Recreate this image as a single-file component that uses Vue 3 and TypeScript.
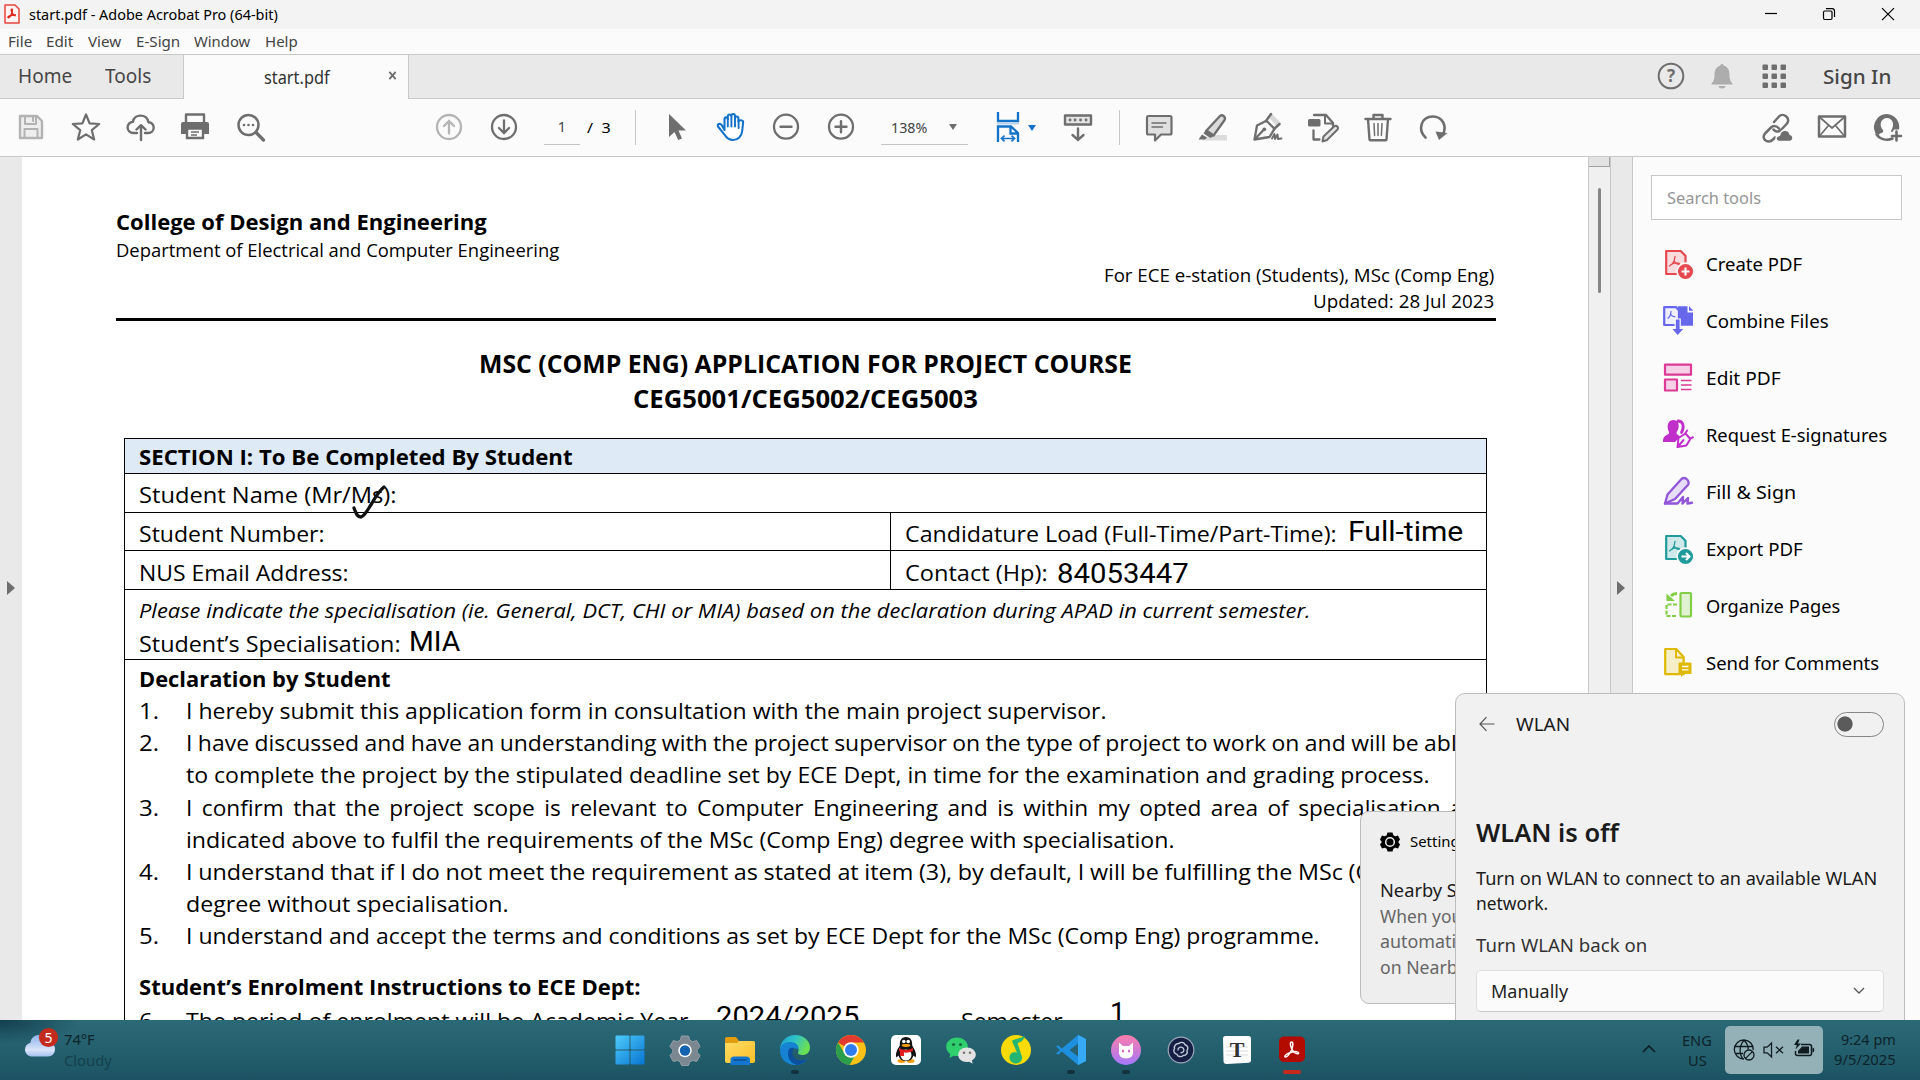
<script setup lang="ts">
import type { Directive } from 'vue'

// Stretches or condenses a run of text so its ink spans the given width.
const vFit: Directive<HTMLElement, number> = {
  mounted(el, binding) {
    const size = parseFloat(getComputedStyle(el).fontSize)
    const natural = el.getBoundingClientRect().width
    const target = binding.value + size * 0.12
    el.style.transform = `scaleX(${(target / natural).toFixed(4)})`
    el.style.marginRight = `${(target - natural).toFixed(2)}px`
  },
}

interface Glyph { id: string; w: number; body: string }

const G = '#6e6e6e'
const s = (w = 2.4, c = G) => `fill="none" stroke="${c}" stroke-width="${w}" stroke-linecap="round" stroke-linejoin="round"`

const fileGlyphs: Glyph[] = [
  { id: 'save', w: 55, body: `<path d="M5 5h17l5 5v17H5z" fill="#eee" stroke="#b3b3b3" stroke-width="2.4" stroke-linejoin="round"/><path d="M10 5v8h11V5M9.500 27v-9h13v9" ${s(2, '#b3b3b3')}/><path d="M18 6v4" ${s(2, '#b3b3b3')}/>` },
  { id: 'star', w: 55, body: `<path d="M16 3.500l3.600 8.900 9.600.6-7.400 6.200 2.400 9.300-8.200-5.100-8.200 5.100 2.400-9.300-7.400-6.200 9.600-.6z" ${s(2.2)}/>` },
  { id: 'upload', w: 54.500, body: `<path d="M12 22H8.500a5.600 5.600 0 0 1-.6-11.200C8.500 7 11.700 4.600 15.500 4.600c4.500 0 7.400 2.900 7.900 6.600 3.200.2 5.300 2.500 5.300 5.300 0 3.100-2.400 5.500-5.500 5.500H20" ${s()}/><path d="M16 29V14.500M11.500 18.500l4.500-4.300 4.500 4.300" ${s()}/>` },
  { id: 'print', w: 54, body: `<path d="M7 11V3.500h18V11" ${s(2.4)}/><path d="M4 11h24q2 0 2 2v10h-5v-4H7v4H2V13q0-2 2-2z" fill="${G}"/><path d="M8 17.500h16V27H8z" fill="#fbfbfb" stroke="${G}" stroke-width="2.400"/><path d="M12 21h8M12 24h6" stroke="${G}" stroke-width="1.300"/>` },
  { id: 'find', w: 57, body: `<circle cx="13.500" cy="14" r="10" ${s(2.5)}/><path d="M21 21.500l7.500 7.500" ${s(3.2)}/><g fill="${G}"><circle cx="9" cy="14" r="1.300"/><circle cx="13.500" cy="14" r="1.300"/><circle cx="18" cy="14" r="1.300"/></g>` },
]

const viewGlyphs: Glyph[] = [
  { id: 'arrow', w: 54, body: `<path d="M8 3v23l5.500-5 3.700 8 3.800-1.600-3.500-8H25z" fill="${G}"/>` },
  { id: 'hand', w: 54, body: `<path d="M9.500 19V8.200c0-2.500 3.300-2.500 3.300 0V5.500c0-2.600 3.600-2.600 3.600 0V5c0-2.600 3.600-2.600 3.600 0v2.500c0-2.600 3.400-2.600 3.400 0v3c.4-2 5-1.700 4.700 1l-.9 8.500c-.5 5.400-4.300 9-9.200 9-4 0-6.500-2-8.300-5.200L3 15.500c-.9-2.600 2-3.700 3.700-1.400z" fill="#fff" stroke="#1473c8" stroke-width="2.100" stroke-linejoin="round"/><path d="M12.800 8v7.500M16.400 6v9.500M20 7v8.500M23.600 10v7" ${s(1.9, '#1473c8')}/>` },
  { id: 'minus', w: 55, body: `<circle cx="16" cy="15.700" r="12" ${s(2.3)}/><path d="M10.500 15.700h11" ${s(2.4)}/>` },
  { id: 'plus', w: 55, body: `<circle cx="16" cy="15.700" r="12" ${s(2.3)}/><path d="M10.500 15.700h11M16 10.200v11" ${s(2.4)}/>` },
]

const editGlyphs: Glyph[] = [
  { id: 'comment', w: 54.500, body: `<path d="M5 5h22q1.500 0 1.500 1.500V22Q28.500 23.500 27 23.500H18l-6 6v-6H5.500Q4 23.500 4 22V6.500Q4 5 5 5z" fill="#e0e0e0" stroke="${G}" stroke-width="2.200" stroke-linejoin="round"/><path d="M9 12h14M9 16h10.500" ${s(1.4)}/>` },
  { id: 'highlight', w: 54.500, body: `<path d="M12 24h18v5.500H5z" fill="#dcdcdc"/><path d="M9.500 19.500L23 5c2-2 6.200.6 4.600 4L16.500 24.500z" fill="#dcdcdc" stroke="${G}" stroke-width="2.300" stroke-linejoin="round"/><path d="M8.500 19l8 6-3 2-7-4.500z" fill="${G}"/><path d="M5 23.500L1.500 28.500H8l2-2z" fill="${G}"/>` },
  { id: 'pen', w: 55, body: `<path d="M16 6l8.500 8.500 4-3L20 3z" fill="#d8d8d8"/><path d="M2.500 28.500L5 14.500 14.500 9.800l8 8L17.500 26z M2.500 28.500l8.500-9" ${s(2.3)}/><circle cx="12.300" cy="18.300" r="1.900" fill="${G}"/><path d="M14 10L19 3M22 18l5.500-5" ${s(2.5)}/><path d="M20 27.500l2.500-4.500 .5 5 2.500-4.500 .5 4.500 3.500-.6" ${s(2)}/>` },
  { id: 'pdfedit', w: 55.500, body: `<path d="M7 4h12l7 8v3M6.500 19.500v9h6" ${s(2.3)}/><path d="M18 4v8.500h8" ${s(2)}/><rect x="1" y="8" width="12.500" height="7.500" rx="1.500" fill="${G}"/><path d="M15.500 30.500l1-5L27 15.500q2-1.500 3.300 0t0 3.300L20 29z" fill="#e6e6e6" stroke="${G}" stroke-width="2" stroke-linejoin="round"/>` },
  { id: 'trash', w: 54.500, body: `<path d="M3.500 8h25M11.500 8V4h9v4M6 8l1.500 20.500q0 .8 1 .8h15q1 0 1-.8L26 8" ${s(2.4)}/><path d="M12 12.500l.6 12M16 12.500v12M20 12.500l-.6 12" ${s(1.5)}/>` },
  { id: 'rotate', w: 54.500, body: `<path d="M8.500 26.500C.5 19 4 5.500 15.800 5.500c10 0 14.200 10 10.200 17.500" ${s(2.6)}/><path d="M18.500 20.500l12 1.500-8.500 7z" fill="${G}"/>` },
]

const shareGlyphs: Glyph[] = [
  { id: 'link', w: 55, body: `<path d="M13 12l5-5.500c4-4.500 12 1.500 8 7l-6 6.500c-2.800 2.600-6 1.500-7.500-.5M18 18.500c-2.500-3-6-3-8-1l-6 6c-4.500 6 3.500 10.500 8 6l2-2" ${s(2.500)} transform="translate(0 -1)"/><path d="M18 30.500q-3-.4-3-3t3.600-3.300q1-5 5.400-5 4.200 0 5 4 3 .8 3 3.700 0 2.800-2.800 3.600z" fill="${G}" stroke="#fbfbfb" stroke-width="1.400"/>` },
  { id: 'mail', w: 55.500, body: `<path d="M3 5.500h26v20H3z" ${s(2.500)}/><path d="M4 6.500l12 10.500L28 6.500M4 24.500l8.500-10M28 24.500l-8.500-10" ${s(1.700)}/>` },
  { id: 'user', w: 54.500, body: `<path d="M16 3a13 13 0 0 0-9.500 21.800c2-2.600 4.600-2.800 5.500-3.800.8-1-.1-2-1.300-3.700C8.200 13 10.500 7 16 7s7.400 6 5.200 10.500c-.9 1.800-1.500 2.600-.7 3.500h1l1.500-2.500h5A13 13 0 0 0 16 3z" fill="${G}"/><path d="M5.600 23.500A12.800 12.800 0 0 0 21.500 27.500" ${s(2.500)}/><path d="M25.500 20.500v9M21 25h9" ${s(2.600)}/>` },
]

const sheet = (c: string, f: string) => `<path d="M3.200 3h14.500l4.800 4.800V26H3.200z" fill="${f}" stroke="${c}" stroke-width="2.200" stroke-linejoin="round"/><path d="M12 8.500c-.6 5.500-1.800 7-5.500 9.500M11.500 13.500c1.500 2.800 3.500 3.200 6.500 3.200M7.500 17c2.500-1.800 6.500-2.400 9-1.500" fill="none" stroke="${c}" stroke-width="1.300" stroke-linecap="round"/>`

interface Tool { label: string; w: number; icon: string }
const tools: Tool[] = [
  { label: 'Create PDF', w: 94, icon: sheet('#e5484f', '#f9dcde') + `<circle cx="22.500" cy="23.500" r="8.400" fill="#e5484f" stroke="#fbfbfb" stroke-width="1.600"/><path d="M22.500 19.500v8M18.500 23.500h8" stroke="#fff" stroke-width="2.200"/>` },
  { label: 'Combine Files', w: 120.5, icon: `<path d="M1.200 2.200h12L16 5.500V20H1.200z" fill="#f0f0ff" stroke="#6767ec" stroke-width="2.200" stroke-linejoin="round"/><path d="M8 6c0 4-1 6-3.500 7.500M7.800 9.500c1 1.800 2.700 2.300 4.500 2.300" fill="none" stroke="#6767ec" stroke-width="1.200"/><path d="M15 1.200h9.500v6.300H30v13.300H15z" fill="#6767ec"/><path d="M26 1l4.300 4.800H26z" fill="#6767ec"/><path d="M12.200 14h5v9.500h4.300L14.700 31 8 23.500h4.200z" fill="#6767ec" stroke="#fbfbfb" stroke-width="1.200"/>` },
  { label: 'Edit PDF', w: 72.5, icon: `<g fill="#f6d0e6" stroke="#dc3a96" stroke-width="2.200" stroke-linejoin="round"><rect x="2" y="2.700" width="26" height="10"/><rect x="2" y="17.500" width="12" height="11"/></g><path d="M18 18.500h10.500M18 23h10.500M18 27.500h10.500" stroke="#dc3a96" stroke-width="1.600"/>` },
  { label: 'Request E-signatures', w: 179, icon: `<path d="M10.500 1c4 0 6 3.600 5 8-.6 2.700-2 3.700-2 5.200 0 1.600 3.500 2 3.500 3.800L12 23H0c0-6 2.500-6.200 5.500-8 1-.7.600-2-.200-3.500C3.500 6 5.500 1 10.500 1z" fill="#c02fc9"/><path d="M15 2c5.500.2 6.500 6 3.500 11.500" ${s(2.8, '#c02fc9')}/><path d="M14.500 28l1-9 7-4.500 4.800 5.500-4 6.500z M14.500 28l6-7M22 14.500l2.200-3M27 20l3-1.800" fill="#fbfbfb" stroke="#c02fc9" stroke-width="2" stroke-linejoin="round" stroke-linecap="round"/>` },
  { label: 'Fill & Sign', w: 88, icon: `<path d="M2 27.500l2.500-9L18.500 3q2.500-2 5.200.2t1.600 5.200L12 23z" fill="#e8ddf8" stroke="#9256d9" stroke-width="2.300" stroke-linejoin="round"/><path d="M2 27.500h12.500L20 21l-.5 6.500L25 22l-.5 5.500 4.500-.8" ${s(2.400, '#9256d9')}/>` },
  { label: 'Export PDF', w: 94.5, icon: sheet('#219a9c', '#cfe8e9') + `<circle cx="22.500" cy="23.500" r="8.400" fill="#219a9c" stroke="#fbfbfb" stroke-width="1.600"/><path d="M18.500 23.500h7M23 20l3.500 3.500L23 27" fill="none" stroke="#fff" stroke-width="2"/>` },
  { label: 'Organize Pages', w: 132, icon: `<rect x="17.500" y="3" width="10.500" height="23.500" rx="1" fill="#e0f2d2" stroke="#82ce46" stroke-width="2.200"/><path d="M14 14.500H3.500V26H14" fill="none" stroke="#82ce46" stroke-width="2.200" stroke-dasharray="4 1.500"/><path d="M14 3.500c-3 .1-4.500.8-6 2.500" fill="none" stroke="#82ce46" stroke-width="2.800"/><path d="M3.500 3.500V11H12z" fill="#82ce46"/>` },
  { label: 'Send for Comments', w: 171, icon: `<path d="M2.200 2h11l7.500 8v17.200H2.200z" fill="#f6eec8" stroke="#dfb900" stroke-width="2.200" stroke-linejoin="round"/><path d="M13 2v8.500h7.500" ${s(2, '#dfb900')}/><path d="M16.500 15.500h11q1 0 1 1v9.500q0 1-1 1H21L18 30v-3h-1.500q-1 0-1-1v-9.500q0-1 1-1z" fill="#dfb900"/><path d="M19 19.500h6.500M19 22.800h6.500" stroke="#fff" stroke-width="1.300"/>` },
]

interface Clause { n: string; top?: number; rows: { t: string; w: number; ws?: number }[] }
const clauses: Clause[] = [
  { n: '1.', rows: [{ t: 'I hereby submit this application form in consultation with the main project supervisor.', w: 918 }] },
  { n: '2.', rows: [
    { t: 'I have discussed and have an understanding with the project supervisor on the type of project to work on and will be able', w: 1281, ws: -0.5 },
    { t: 'to complete the project by the stipulated deadline set by ECE Dept, in time for the examination and grading process.', w: 1241 },
  ] },
  { n: '3.', top: 1, rows: [
    { t: 'I confirm that the project scope is relevant to Computer Engineering and is within my opted area of specialisation as', w: 1285, ws: 3.4 },
    { t: 'indicated above to fulfil the requirements of the MSc (Comp Eng) degree with specialisation.', w: 986 },
  ] },
  { n: '4.', rows: [
    { t: 'I understand that if I do not meet the requirement as stated at item (3), by default, I will be fulfilling the MSc (Comp Eng)', w: 1284, ws: -0.4 },
    { t: 'degree without specialisation.', w: 320 },
  ] },
  { n: '5.', rows: [{ t: 'I understand and accept the terms and conditions as set by ECE Dept for the MSc (Comp Eng) programme.', w: 1131 }] },
]

interface App { id: string; mark?: string; body: string }
const apps: App[] = [
  { id: 'start', body: `<g fill="url(#win)"><rect x="1.500" y="1.500" width="14" height="14" rx="1"/><rect x="16.500" y="1.500" width="14" height="14" rx="1"/><rect x="1.500" y="16.500" width="14" height="14" rx="1"/><rect x="16.500" y="16.500" width="14" height="14" rx="1"/></g>` },
  { id: 'settings', body: `<path d="M12.500 2h7l1.200 4 3 1.700 4-1.200 3.400 6-2.800 3v3l2.800 3-3.400 6-4-1-3 1.500-1.200 3.500h-7L11.300 28l-3-1.500-4 1-3.400-6 2.800-3v-3l-2.800-3 3.400-6 4 1.200L11.300 6z" fill="#7b8791" stroke="#929ca5"/><circle cx="16" cy="16.500" r="6.700" fill="#fff"/><circle cx="16" cy="16.500" r="5.200" fill="#1463b0"/>` },
  { id: 'folder', body: `<path d="M1 5q0-2 2-2h9l3 4h14q2 0 2 2v6H1z" fill="#e29c10"/><path d="M1 9h12l2-2h14q2 0 2 2v18q0 2-2 2H3q-2 0-2-2z" fill="url(#fold)"/><path d="M6.500 31v-5q0-3.500 3.500-3.500h12.500q3.500 0 3.500 3.500v5z" fill="#1576d0"/><path d="M9.500 26h13" stroke="#0a4f94" stroke-width="1.600"/>` },
  { id: 'edge', mark: 'dot', body: `<path d="M1 16C1 7 8 1 16 1c9 0 15 6 15 12.500 0 5-3.500 7.500-7.500 7.500-3 0-5-1-4.500-2.500 1-2 .8-3.500-.5-5C15 9 5 9 1 16z" fill="url(#edgeTop)"/><path d="M1 16c0-5 5-8 10-8 6 0 9 3.500 8.500 7C14 13 11 17 13 22c2 4.500 8 6.500 15 3-3 4.500-7 6-12 6C7 31 1 24.500 1 16z" fill="#1583d2"/><path d="M10 15c-3 7 1 14 8 16 4-.6 8-2.500 10-6-7 3-12 1-14-3-1.500-3.500-.5-6 1.500-8-2-.6-4-.3-5.500 1z" fill="#0c4f9c"/>` },
  { id: 'chrome', body: `<circle cx="16" cy="16" r="15" fill="#fbc116"/><path d="M16 16L3 8.500A15 15 0 0 1 29 8.500H16z" fill="#e23a2e"/><path d="M3 8.500A15 15 0 0 0 14.500 31l7-12L16 16 9.500 19.500z" fill="#2a9e4b"/><circle cx="16" cy="16" r="7.700" fill="#fff"/><circle cx="16" cy="16" r="6" fill="#2f7cee"/>` },
  { id: 'qq', body: `<rect x="1" y="1" width="30" height="30" rx="5" fill="#fff"/><ellipse cx="11.500" cy="27" rx="4" ry="1.900" fill="#f59f0b"/><ellipse cx="20.500" cy="27" rx="4" ry="1.900" fill="#f59f0b"/><path d="M16 3c-4.500 0-6.500 3.500-6.200 8.500C7 16 5 20 6.500 23.500l2-2C10 26 12.500 27 16 27s6-1 7.500-5.500l2 2C27 20 25 16 22.200 11.500 22.500 6.500 20.500 3 16 3z" fill="#111"/><ellipse cx="16" cy="21" rx="5.500" ry="5.500" fill="#fff"/><path d="M9 14q7 4 14 0v3q-7 3.500-14 0z" fill="#e02020"/><path d="M10 16h4v6h-4z" fill="#e02020"/><circle cx="13.800" cy="7.500" r="1.800" fill="#fff"/><circle cx="18.200" cy="7.500" r="1.800" fill="#fff"/><ellipse cx="16" cy="11.500" rx="4.300" ry="1.400" fill="#f59f0b"/>` },
  { id: 'wechat', body: `<path d="M12 3.500C6 3.500 1.200 7.500 1.200 12.800c0 3 1.600 5.500 4 7.200L4.500 24l4-2.300c7 1.800 14.300-2.400 14.300-9C22.800 7.500 18 3.500 12 3.500z" fill="#2fcf6e"/><circle cx="8.500" cy="10.500" r="1.600" fill="#176b3a"/><circle cx="15.500" cy="10.500" r="1.600" fill="#176b3a"/><path d="M22 13.500c-5 0-8.800 3.200-8.800 7.300 0 5 5.300 8.300 11 6.900l3.500 2-.8-3.300c2.300-1.400 3.900-3.300 3.900-5.700 0-4-4-7.200-8.800-7.200z" fill="#e3e3e3"/><circle cx="19" cy="18.800" r="1.300" fill="#777"/><circle cx="25" cy="18.800" r="1.300" fill="#777"/>` },
  { id: 'music', body: `<circle cx="16" cy="16" r="15" fill="#fada07"/><path d="M24.500 1.500c-3 3.500-9 2.500-12.500 5.500l5 11.500c-4-1.200-7.500 1-7.500 5 0 3.700 3 6 6.500 6s6.500-2.500 6-6.500L17.500 9c3-.5 6.500-2.500 7-7.500z" fill="#22b573"/>` },
  { id: 'code', mark: 'dot', body: `<path d="M23 1l8 4v22l-8 4L7 17.500l-4 3.200L1 19.500l4-3.500-4-3.500 2-1.200 4 3.200z" fill="#1f8fe0"/><path d="M23 1l8 4v22l-8 4z" fill="#36aaf5"/><path d="M23 9.500v13L14.500 16z" fill="#276272"/>` },
  { id: 'cat', mark: 'dot', body: `<circle cx="16" cy="16" r="15" fill="url(#cat)"/><path d="M9 8.500l4 3.500h6l4-3.500v10.500q0 5-7 5.500-7-.5-7-5.500z" fill="#fff"/><ellipse cx="13" cy="17" rx="1.100" ry="1.500" fill="#d964c8"/><ellipse cx="19" cy="17" rx="1.100" ry="1.500" fill="#d964c8"/>` },
  { id: 'swirl', body: `<circle cx="16" cy="16" r="12.800" fill="#151f43" stroke="#9aa6b8" stroke-width="1.200"/><path d="M14 9.500c2-2 5.500-1 6 1.200 3 .7 3.600 4 2 5.700 1 3-1 5.200-3.700 5-2 2-5.400 1.400-6.300-1-3-.6-4-3.800-2.500-5.800-.7-2.600 1.500-5.400 4.500-5.100z" fill="none" stroke="#c3cad8" stroke-width="1.400"/><path d="M13 16.500c-.5-3 3-4.500 5-2.500s.5 5-2.500 4.700" fill="none" stroke="#c3cad8" stroke-width="1.300"/>` },
  { id: 'typora', body: `<path d="M4.500 2h23q2.500 0 2.500 2.500v22q0 2-2 2.300L6 30q-3.500.2-3.500-3L2 4.500Q2 2 4.500 2z" fill="#fcfcfc"/><path d="M5 13h22M5 17h22M5 21h22" stroke="#ddd"/><text x="16" y="23" text-anchor="middle" font-family="Liberation Serif, serif" font-weight="700" font-size="22" fill="#333">T</text>` },
  { id: 'acrobat', mark: 'wide', body: `<rect x="3" y="2.500" width="26" height="25.500" rx="5" fill="#b30b00"/><path d="M15.500 8c2.300 0 1.500 5-.5 9-1.500 3-4 6-5.500 6-2-.2.500-3.500 6-4.800 4-1 7-.7 7.200.8 0 1.600-3.600.8-5.700-2-2.200-3-3.700-9-1.500-9z" fill="none" stroke="#fff" stroke-width="1.500"/>` },
]
</script>

<template>
  <div class="desktop">
    <header class="titlebar">
      <svg class="pdf-mark" viewBox="0 0 16 20"><path d="M1 1h10l4 4v14H1z" fill="#fff4f3" stroke="#e8453c" stroke-width="1.500" stroke-linejoin="round" /><path d="M7.500 5c1.500 0 .8 3.500-.5 6-1 2-2.500 3-3 2.500S6 10.800 12 11M7.500 5c-1 1.500 1 5.500 4 7" fill="none" stroke="#e0261c" stroke-width="1.500" /></svg>
      <span v-fit="247" class="title">start.pdf - Adobe Acrobat Pro (64-bit)</span>
      <svg class="winctl" viewBox="0 0 150 30" fill="none" stroke="#000" stroke-width="1.200"><path d="M15 13.500h12" /><rect x="73.500" y="11" width="8.500" height="8.500" rx="1.200" /><path d="M76 8.600h6q2.500 0 2.500 2.500v6" /><path d="M132 8.200l12 12M144 8.200l-12 12" /></svg>
    </header>

    <nav class="menubar">
      <span v-fit="22.500">File</span><span v-fit="25.500">Edit</span><span v-fit="31.500">View</span>
      <span v-fit="42.500">E-Sign</span><span v-fit="54.500">Window</span><span v-fit="31">Help</span>
    </nav>

    <div class="tabbar">
      <div class="hometabs"><span v-fit="52">Home</span><span v-fit="44">Tools</span></div>
      <div class="filetab">
        <span v-fit="63.500" class="tabname">start.pdf</span>
        <svg viewBox="0 0 10 10"><path d="M1.500 1l7 8M8.500 1l-7 8" stroke="#6b6b6b" stroke-width="2" /></svg>
      </div>
      <div class="account">
        <svg class="help" viewBox="0 0 28 28"><circle cx="14" cy="14" r="12.300" fill="none" stroke="#6e6e6e" stroke-width="2" /><text x="14" y="20" text-anchor="middle" font-family="Noto Sans, sans-serif" font-weight="700" font-size="17" fill="#6e6e6e">?</text></svg>
        <svg class="bell" viewBox="0 0 22 26"><path d="M11 1q1.800 0 1.800 1.800C17.500 4 18.500 8 18.500 12c0 4.500 1 6.500 3 8.500v1H.5v-1c2-2 3-4 3-8.500 0-4 1-8 5.700-9.200Q9.200 1 11 1zM7.500 23h7Q14 25.500 11 25.500T7.500 23z" fill="#adadad" /></svg>
        <svg class="grid" viewBox="0 0 24 24" fill="#6e6e6e"><template v-for="r in 3" :key="r"><rect v-for="c in 3" :key="c" :x="(c - 1) * 9 + 0.500" :y="(r - 1) * 9 + 0.500" width="5.500" height="5.500" rx="1" /></template></svg>
        <span v-fit="66" class="signin">Sign In</span>
      </div>
    </div>

    <div class="toolbar">
      <div class="group g-file">
        <div v-for="g in fileGlyphs" :key="g.id" class="cell" :style="{ width: g.w + 'px' }"><svg viewBox="0 0 32 32" v-html="g.body" /></div>
      </div>
      <div class="group g-page">
        <div class="cell c55"><svg viewBox="0 0 32 32" fill="none" stroke="#b4b4b4" stroke-width="2.300" stroke-linecap="round"><circle cx="16" cy="16" r="12" /><path d="M16 22.500V10M11 15l5-5 5 5" /></svg></div>
        <div class="cell c55"><svg viewBox="0 0 32 32" fill="none" stroke="#6e6e6e" stroke-width="2.300" stroke-linecap="round"><circle cx="16" cy="16" r="12" /><path d="M16 9.500V22M11 17l5 5 5-5" /></svg></div>
        <div class="pagebox">1</div>
        <span v-fit="22" class="pagecount">/&nbsp; 3</span>
      </div>
      <i class="sep" />
      <div class="group g-view">
        <div v-for="g in viewGlyphs" :key="g.id" class="cell" :style="{ width: g.w + 'px' }"><svg viewBox="0 0 32 32" v-html="g.body" /></div>
        <div class="zoombox"><span v-fit="34.500">138%</span><i class="caret" /></div>
      </div>
      <div class="group g-fit">
        <svg class="i-fit" viewBox="0 0 24 32" fill="none" stroke="#1473c8" stroke-width="2.300"><path d="M2 1v9h20V1" /><path d="M1 12.500h22" stroke="#b9d2ee" stroke-width="2" /><path d="M2 31V15.500h13l7 6.500v9M14.500 16v6.500H22" /><path d="M5.500 27.500h13M8.500 24.700l-3 2.800 3 2.800M15.500 24.700l3 2.800-3 2.800" stroke-width="1.700" /></svg>
        <i class="caret blue" />
        <svg class="i-scroll" viewBox="0 0 32 32" fill="none" stroke="#6e6e6e" stroke-width="2.400" stroke-linecap="round"><rect x="3" y="4.500" width="26" height="9" fill="#e4e4e4" stroke-linejoin="round" /><path d="M8 9h.1M13 9h.1M18.500 9h.1M24 9h.1" stroke-width="2.800" /><path d="M16 17.500v11M10.500 24l5.500 4.800 5.500-4.800" /></svg>
      </div>
      <i class="sep s2" />
      <div class="group g-edit">
        <div v-for="g in editGlyphs" :key="g.id" class="cell" :style="{ width: g.w + 'px' }"><svg viewBox="0 0 32 32" v-html="g.body" /></div>
      </div>
      <div class="group g-share">
        <div v-for="g in shareGlyphs" :key="g.id" class="cell" :style="{ width: g.w + 'px' }"><svg viewBox="0 0 32 32" v-html="g.body" /></div>
      </div>
    </div>

    <main class="work">
      <aside class="gutter left"><i class="tri" /></aside>

      <article class="page">
        <div class="ln l1"><b v-fit="368">College of Design and Engineering</b></div>
        <div class="ln l2"><span v-fit="441">Department of Electrical and Computer Engineering</span></div>
        <div class="ln right"><span v-fit="388">For ECE e-station (Students), MSc (Comp Eng)</span></div>
        <div class="ln right"><span v-fit="179">Updated: 28 Jul 2023</span></div>
        <div class="rule" />
        <div class="ln head"><b v-fit="650">MSC (COMP ENG) APPLICATION FOR PROJECT COURSE</b></div>
        <div class="ln head"><b v-fit="342">CEG5001/CEG5002/CEG5003</b></div>

        <section class="form">
          <div class="row r1"><b v-fit="431">SECTION I: To Be Completed By Student</b></div>
          <div class="row r2">
            <span v-fit="255">Student Name (Mr/Ms):</span>
            <svg class="tick" viewBox="0 0 36 36"><path d="M2 23c2 5 3 9 7 9 4-1 7-8 11-14 4-7 7-12 12-16" fill="none" stroke="#111" stroke-width="3.300" stroke-linecap="round" /></svg>
          </div>
          <div class="row r3">
            <div class="half"><span v-fit="183">Student Number:</span></div>
            <div class="half"><span v-fit="429">Candidature Load (Full-Time/Part-Time):</span><em v-fit="112" class="entry e1">Full-time</em></div>
          </div>
          <div class="row r4">
            <div class="half"><span v-fit="207">NUS Email Address:</span></div>
            <div class="half"><span v-fit="140">Contact (Hp):</span><em v-fit="128.500" class="entry e2">84053447</em></div>
          </div>
          <div class="row r5">
            <div class="ln note"><i v-fit="1169">Please indicate the specialisation (ie. General, DCT, CHI or MIA) based on the declaration during APAD in current semester.</i></div>
            <div class="ln spec"><span v-fit="259">Student’s Specialisation:</span><em v-fit="48" class="entry e3">MIA</em></div>
          </div>
          <div class="row r6">
            <div class="ln"><b v-fit="249">Declaration by Student</b></div>
            <div v-for="c in clauses" :key="c.n" class="clause" :style="{ marginTop: (c.top ?? 0) + 'px' }">
              <div class="num"><span v-fit="17.500">{{ c.n }}</span></div>
              <div>
                <div v-for="r in c.rows" :key="r.t" class="ln"><span v-fit="r.w" :style="{ wordSpacing: (r.ws ?? 0) + 'px' }">{{ r.t }}</span></div>
              </div>
            </div>
            <div class="ln enrol"><b v-fit="499">Student’s Enrolment Instructions to ECE Dept:</b></div>
            <div class="clause last">
              <div class="num"><span v-fit="17.500">6.</span></div>
              <div class="ln"><span v-fit="500">The period of enrolment will be Academic Year</span><em v-fit="140" class="entry e4">2024/2025</em><span v-fit="99" class="sem">Semester</span><em class="entry e5">1</em></div>
            </div>
          </div>
        </section>
      </article>

      <div class="scroll"><i class="stub" /><i class="thumb" /></div>
      <aside class="gutter rgt"><i class="tri" /></aside>

      <aside class="tools">
        <div class="search"><span v-fit="92">Search tools</span></div>
        <ul>
          <li v-for="t in tools" :key="t.label"><svg viewBox="0 0 32 32" v-html="t.icon" /><span v-fit="t.w">{{ t.label }}</span></li>
        </ul>
      </aside>
    </main>

    <div class="toast">
      <div class="toast-head">
        <svg viewBox="0 0 20 20"><path d="M7.500.5h5l.8 2.700 2 1.100L18 3.500l2 4-1.800 2.500L20 12.500l-2 4-2.700-.8-2 1.100-.8 2.700h-5l-.8-2.700-2-1.100-2.700.8-2-4L1.800 10 0 7.500l2-4 2.700.8 2-1.100z" fill="#000" /><circle cx="10" cy="10" r="4.300" fill="none" stroke="#eee" stroke-width="1.500" /></svg>
        <span v-fit="55">Settings</span>
      </div>
      <p class="dark"><span v-fit="86">Nearby Sh</span></p>
      <p><span v-fit="80">When you</span></p>
      <p><span v-fit="111">automatically</span></p>
      <p><span v-fit="84">on Nearby</span></p>
    </div>

    <div class="flyout">
      <div class="fly-head">
        <svg class="back" viewBox="0 0 16 16"><path d="M15.500 8H1M7.500 1.200L1 8l6.500 6.800" fill="none" stroke="#555" stroke-width="1.200" /></svg>
        <span v-fit="52">WLAN</span>
        <i class="toggle" />
      </div>
      <h2><span v-fit="140">WLAN is off</span></h2>
      <p><span v-fit="399">Turn on WLAN to connect to an available WLAN</span></p>
      <p><span v-fit="70">network.</span></p>
      <p class="again"><span v-fit="169">Turn WLAN back on</span></p>
      <div class="select"><span v-fit="75">Manually</span><svg viewBox="0 0 12 8"><path d="M1 1l5 5 5-5" fill="none" stroke="#555" stroke-width="1.300" /></svg></div>
    </div>

    <footer class="taskbar">
      <svg class="defs" width="0" height="0"><defs>
        <linearGradient id="win" gradientUnits="userSpaceOnUse" x1="0" y1="0" x2="30" y2="32"><stop offset="0" stop-color="#52d0fb" /><stop offset="1" stop-color="#0673d2" /></linearGradient>
        <linearGradient id="fold" x1="0" y1="0" x2="1" y2="1"><stop offset="0" stop-color="#ffdc66" /><stop offset="1" stop-color="#fbbf28" /></linearGradient>
        <linearGradient id="edgeTop" x1="0" y1="0" x2="1" y2="0.400"><stop offset="0" stop-color="#1c9bd8" /><stop offset="0.500" stop-color="#2fc3c8" /><stop offset="1" stop-color="#6adf52" /></linearGradient>
        <linearGradient id="cat" x1="0" y1="0" x2="0" y2="1"><stop offset="0" stop-color="#fb7dab" /><stop offset="1" stop-color="#a478fa" /></linearGradient>
        <linearGradient id="cloud" x1="0" y1="0" x2="0" y2="1"><stop offset="0" stop-color="#8fb3ee" /><stop offset="0.700" stop-color="#d9e4f8" /><stop offset="1" stop-color="#a5c0f0" /></linearGradient>
      </defs></svg>
      <div class="weather">
        <svg viewBox="0 0 38 34"><path d="M8 29.500a7 7 0 0 1-.5-13.800C8 10.500 12 8 16 8c4.500 0 8 3 8.500 7 4-.5 7.500 2.500 7.500 7 0 4.500-3 7.500-7 7.500z" fill="url(#cloud)" /><circle cx="25.500" cy="10.500" r="9.600" fill="#c42b1c" /><text x="25.500" y="15.500" text-anchor="middle" font-family="Noto Sans, sans-serif" font-size="14" fill="#fff">5</text></svg>
        <div class="readout"><span v-fit="29">74°F</span><span v-fit="46" class="dim">Cloudy</span></div>
      </div>
      <div class="apps">
        <div v-for="a in apps" :key="a.id" class="app"><svg viewBox="0 0 32 32" v-html="a.body" /><i :class="a.mark" /></div>
      </div>
      <div class="tray">
        <svg class="chev" viewBox="0 0 14 8"><path d="M1 7l6-6 6 6" fill="none" stroke="#0c1c22" stroke-width="1.600" /></svg>
        <div class="lang"><span v-fit="28">ENG</span><span v-fit="17">US</span></div>
        <div class="quick">
          <svg viewBox="0 0 22 22" fill="none" stroke="#111c20" stroke-width="1.300"><path d="M11 20a9.500 9.500 0 1 1 9.300-9M2 7.500h17.500M2 14.500h8M11 1.500c-5 5-5 13.500-1 18.500M11 1.500c3 2.500 4.200 6 4.200 9" /><circle cx="16" cy="16" r="5" /><path d="M12.600 19.400l6.800-6.800" /></svg>
          <svg class="snd" viewBox="0 0 22 22" fill="none" stroke="#111c20" stroke-width="1.300"><path d="M1 8.200h3.200L8.500 4v14L4.200 13.800H1zM13 7.700l7 6.600M20 7.700l-7 6.600" /></svg>
          <svg class="bat" viewBox="0 0 22 22"><path d="M8 5.500h8.500q2 0 2 2v7q0 2-2 2h-12q-2 0-2-2V12" fill="none" stroke="#111c20" stroke-width="1.500" /><path d="M9 7.500h7v7H5V12z" fill="#111c20" /><path d="M19.500 8.500q1.800 0 1.800 2.500t-1.800 2.500z" fill="#111c20" /><path d="M4.500 .5L1 6h2.800L2.500 10.500 8 4.500H5L6.500 .5z" fill="#111c20" /></svg>
        </div>
        <div class="clock"><span v-fit="53">9:24 pm</span><span v-fit="60">9/5/2025</span></div>
      </div>
    </footer>
  </div>
</template>

<style>
html, body { margin: 0; background: #fbfbfb; overflow: hidden; }
</style>

<style scoped>
.desktop { position: relative; width: 1920px; height: 1080px; overflow: hidden; display: flex; flex-direction: column; font-family: "Noto Sans", "Open Sans", sans-serif; color: #000; background: #fbfbfb; }
.desktop * { box-sizing: border-box; }
span, b, em, .note i { white-space: nowrap; display: inline-block; flex: none; transform-origin: 0 50%; }
svg { display: block; flex: none; }

.titlebar { height: 29px; flex: none; display: flex; align-items: center; background: #f3f3f3; font-size: 14.500px; padding-left: 4px; }
.pdf-mark { width: 16px; height: 20px; margin-top: -2px; }
.title { margin-left: 9px; line-height: 28px; margin-top: -1px; }
.winctl { width: 150px; height: 30px; margin-left: auto; margin-right: 20px; }

.menubar { height: 25px; flex: none; display: flex; gap: 14.500px; padding-left: 7.500px; font-size: 14.500px; line-height: 25px; color: #444; background: #fbfbfb; }

.tabbar { height: 45px; flex: none; display: flex; background: #e9e9e9; border-top: 1px solid #c8c8c8; border-bottom: 1px solid #c8c8c8; color: #464646; }
.hometabs { width: 183px; display: flex; gap: 33px; padding-left: 17.500px; font-size: 19px; line-height: 43px; }
.filetab { width: 226px; height: 44px; display: flex; align-items: center; background: #fbfbfb; border-left: 1px solid #c8c8c8; border-right: 1px solid #c8c8c8; padding-left: 80px; font-size: 17.500px; }
.tabname { color: #333; line-height: 43px; }
.filetab svg { width: 9px; height: 9px; margin-left: 58px; margin-top: -3px; }
.account { margin-left: auto; display: flex; align-items: center; width: 263.500px; }
.help { width: 28px; height: 28px; margin-top: -1px; }
.bell { width: 22px; height: 26px; margin-left: 26.500px; margin-top: -1px; }
.grid { width: 24px; height: 24px; margin-left: 28.500px; margin-top: -1px; }
.signin { margin-left: 37px; font-size: 19.500px; font-weight: 500; line-height: 46px; margin-top: 1px; }

.toolbar { height: 58px; flex: none; display: flex; align-items: center; border-bottom: 1px solid #c8c8c8; background: #fbfbfb; }
.group { display: flex; align-items: center; flex: none; }
.cell { display: flex; justify-content: center; flex: none; }
.cell svg, .i-fit, .i-scroll { margin-top: -2px; }
.cell svg { width: 32px; height: 32px; }
.c55 { width: 55px; }
.g-file { width: 421.500px; padding-left: 3.500px; }
.g-page { width: 213px; font-size: 14.500px; }
.pagebox { width: 36px; margin-left: 12.500px; height: 35px; border-bottom: 1px solid #c4c4c4; text-align: center; line-height: 33px; color: #444; }
.pagecount { margin-left: 7px; line-height: 33px; }
.sep { width: 1px; height: 35px; background: #c8c8c8; }
.g-view { width: 347px; padding-left: 14.500px; }
.zoombox { width: 87px; height: 35px; margin-left: 12.500px; border-bottom: 1px solid #c4c4c4; padding-left: 10px; display: flex; align-items: center; font-size: 14.500px; color: #444; line-height: 33px; }
.caret { border: 4.500px solid transparent; border-top: 6px solid #6e6e6e; border-bottom: 0; margin-left: 22px; }
.caret.blue { border-top-color: #1473c8; margin-left: 8px; }
.g-fit { width: 136px; padding-left: 13px; }
.i-fit { width: 24px; height: 32px; }
.i-scroll { width: 32px; height: 32px; margin-left: 26px; }
.g-edit { padding-left: 12px; }
.g-share { margin-left: auto; margin-right: 6px; }

.work { height: 863px; flex: none; display: flex; overflow: hidden; background: #fff; }
.gutter { background: #e9e9e9; display: flex; align-items: center; flex: none; padding-bottom: 2px; }
.left { width: 22px; padding-left: 7px; }
.rgt { width: 23px; padding-left: 6px; border-left: 1px solid #c8c8c8; border-right: 1px solid #c8c8c8; }
.tri { border: 7px solid transparent; border-left: 8px solid #6e6e6e; border-right: 0; }

.page { width: 1566px; flex: none; padding: 50px 0 0 94px; font-family: "Open Sans", "Noto Sans", sans-serif; font-size: 21.500px; line-height: 32px; }
.ln { height: 32px; display: flex; }
.l1 { height: 30px; line-height: 30px; }
.l2 { height: 25px; line-height: 25px; font-size: 18.300px; }
.right { width: 1378px; height: 26px; line-height: 26px; font-size: 18px; justify-content: flex-end; }
.rule { width: 1380px; height: 3px; margin: 4px 0 25px 0; background: #000; }
.head { height: 35px; line-height: 35px; font-size: 24.300px; width: 1379px; justify-content: center; }
.form { width: 1363px; margin: 22px 0 0 8px; border: 1px solid #000; border-bottom: 0; height: 700px; }
.row { border-bottom: 1px solid #000; padding-left: 14px; display: flex; }
.r1 { height: 35px; padding-top: 2px; background: #deeaf6; }
.r2 { height: 39px; padding-top: 5px; }
.tick { width: 36px; height: 36px; margin: 1px 0 0 -45px; position: relative; top: 5px; }
.r3, .r4 { padding-left: 0; }
.r3 { height: 38px; }
.r4 { height: 39px; }
.half { display: flex; align-items: baseline; padding: 5px 0 0 14px; width: 765px; }
.half + .half { border-left: 1px solid #000; width: 596px; padding-left: 14px; }
.r4 .half { padding-top: 6px; }
.entry { font-family: Roboto, "Noto Sans", sans-serif; font-style: normal; font-size: 27.500px; line-height: 1px; position: relative; }
.e1 { margin-left: 11px; top: -1px; }
.e2 { margin-left: 9px; top: 2px; }
.e3 { margin-left: 8px; top: -1px; }
.e4 { margin-left: 28px; top: -3px; }
.e5 { margin-left: 47px; top: -7px; }
.sem { margin-left: 102px; }
.r5 { height: 70px; padding-top: 4px; flex-direction: column; }
.note { font-size: 20.700px; margin-bottom: 2px; }
.spec { align-items: baseline; }
.r6 { border: 0; padding-top: 3px; flex-direction: column; }
.clause { display: flex; }
.num { width: 46.500px; }
.enrol { margin-top: 19px; }
.last { margin-top: 2px; }
.last .ln { align-items: baseline; }

.scroll { width: 22px; flex: none; background: #f0f0f0; border-left: 1px solid #c8c8c8; display: flex; flex-direction: column; }
.stub { height: 10px; background: #e3e3e3; border-right: 1px solid #a0a0a0; border-bottom: 1px solid #a0a0a0; }
.thumb { width: 3px; height: 105px; margin: 21px 0 0 9px; background: #858585; border-radius: 1.500px; }

.tools { width: 287px; background: #fbfbfb; padding: 18px 18px 0 18px; }
.search { height: 45px; width: 251px; background: #fff; border: 1px solid #c8c8c8; padding-left: 15px; font-size: 17px; line-height: 43px; color: #959595; }
.tools ul { list-style: none; margin: 15px 0 0; padding: 0; }
.tools li { height: 57px; display: flex; align-items: center; font-size: 18px; }
.tools li svg { width: 32px; height: 32px; margin-left: 12px; margin-right: 11px; }
.tools li span { line-height: 57px; margin-top: 1px; }

.toast { position: absolute; left: 1360px; top: 811px; width: 140px; height: 193px; background: #eee; border: 1px solid #bcbcbc; border-radius: 9px; padding: 19px 0 0 19px; }
.toast-head { display: flex; align-items: center; height: 22px; font-size: 15px; margin-bottom: 25px; }
.toast-head svg { width: 20px; height: 20px; margin-right: 10px; }
.toast-head span { margin-top: -2px; }
.toast p { margin: 0; height: 25.500px; line-height: 25px; font-size: 18px; color: #666; }
.toast p.dark { color: #1b1b1b; }

.flyout { position: absolute; left: 1455px; top: 693px; width: 450px; height: 340px; background: #f1f1f1; border: 1px solid #bdbdbd; border-radius: 10px; padding: 15px 0 0 20px; color: #1b1b1b; font-size: 18px; }
.fly-head { display: flex; align-items: center; height: 30px; font-size: 17.500px; }
.back { width: 16px; height: 16px; margin: 0 21px 0 3px; }
.toggle { width: 50px; height: 25px; margin-left: auto; margin-right: 20px; border: 1.500px solid #858585; border-radius: 13px; background: radial-gradient(circle at 10px 11px, #5b5b5b 7.200px, transparent 8px); }
h2 { margin: 77px 0 0; height: 34px; line-height: 34px; font-size: 24.500px; font-weight: 600; }
.flyout p { margin: 0; height: 25px; line-height: 25px; }
.flyout h2 + p { margin-top: 16px; }
.flyout p.again { margin-top: 17px; color: #333; }
.select { width: 408px; height: 42px; margin-top: 12px; background: #fbfbfb; border: 1px solid #dedede; border-bottom-color: #c8c8c8; border-radius: 5px; padding: 0 18px 0 14px; display: flex; align-items: center; justify-content: space-between; color: #222; }
.select svg { width: 12px; height: 8px; }

.taskbar { position: relative; height: 60px; flex: none; display: flex; background: radial-gradient(ellipse 80px 24px at 0 0, rgba(10, 48, 64, .75), transparent), linear-gradient(#2c6977, #205a69 75%, #1c5263); font-size: 14.500px; color: #0e2329; }
.defs { position: absolute; }
.weather { width: 602.500px; padding: 7px 0 0 23px; display: flex; }
.weather svg { width: 38px; height: 34px; }
.readout { margin-left: 3px; padding-top: 2px; display: flex; flex-direction: column; align-items: flex-start; line-height: 20.500px; }
.dim { color: #15404c; }
.apps { display: flex; width: 1039.500px; }
.app { width: 55.150px; display: flex; flex-direction: column; align-items: center; padding-top: 14px; flex: none; }
.app svg { width: 32px; height: 32px; }
.app i { height: 4px; border-radius: 2px; margin-top: 4px; }
.dot { width: 8px; background: #12333e; }
.wide { width: 18px; background: #c42b1c; }
.tray { display: flex; width: 278px; }
.chev { width: 14px; height: 8px; margin-top: 25px; }
.lang { width: 69px; display: flex; flex-direction: column; align-items: center; padding: 9.500px 0 0 13px; line-height: 20px; }
.quick { width: 98px; height: 48px; margin-top: 6px; background: #94b1b8; border-radius: 5px; display: flex; align-items: center; gap: 8px; padding-left: 8px; }
.quick svg { width: 22px; height: 22px; }
.clock { width: 73px; display: flex; flex-direction: column; align-items: flex-end; padding-top: 9px; line-height: 20px; }
</style>
